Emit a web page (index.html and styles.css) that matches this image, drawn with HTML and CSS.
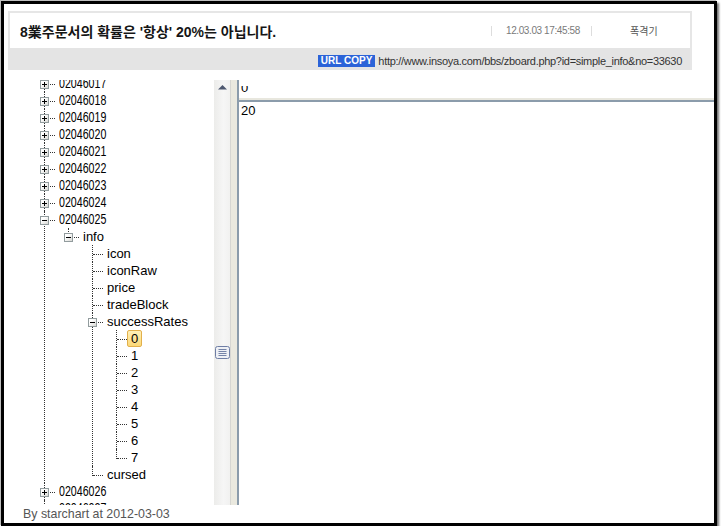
FILE: index.html
```html
<!DOCTYPE html>
<html lang="ko">
<head>
  <meta charset="UTF-8">
  <title>8業주문서의 확률은 '항상' 20%는 아닙니다.</title>
  <link rel="stylesheet" href="styles.css">
</head>
<body>
  <div class="frame">
    <!-- 글 제목 -->
    <div class="post-head">
      <div class="post-title-row">
        <div class="post-title">8業주문서의 확률은 '항상' 20%는 아닙니다.</div>
        <div class="post-date">12.03.03 17:45:58</div>
        <div class="post-author">폭격기</div>
      </div>
      <div class="post-url-row">
        <span class="url-copy">URL COPY</span>
        <span class="url-text">http://www.insoya.com/bbs/zboard.php?id=simple_info&amp;no=33630</span>
      </div>
    </div>

    <!-- 스크린샷 -->
    <div class="shot">
      <div class="tree-pane">
        <ul class="tree">
          <li><span class="tog plus"></span><div class="row"><span class="n">02046017</span></div></li>
          <li><span class="tog plus"></span><div class="row"><span class="n">02046018</span></div></li>
          <li><span class="tog plus"></span><div class="row"><span class="n">02046019</span></div></li>
          <li><span class="tog plus"></span><div class="row"><span class="n">02046020</span></div></li>
          <li><span class="tog plus"></span><div class="row"><span class="n">02046021</span></div></li>
          <li><span class="tog plus"></span><div class="row"><span class="n">02046022</span></div></li>
          <li><span class="tog plus"></span><div class="row"><span class="n">02046023</span></div></li>
          <li><span class="tog plus"></span><div class="row"><span class="n">02046024</span></div></li>
          <li><span class="tog"></span><div class="row"><span class="n">02046025</span></div>
            <ul>
              <li><span class="tog"></span><div class="row">info</div>
                <ul>
                  <li><div class="row">icon</div></li>
                  <li><div class="row">iconRaw</div></li>
                  <li><div class="row">price</div></li>
                  <li><div class="row">tradeBlock</div></li>
                  <li><span class="tog"></span><div class="row">successRates</div>
                    <ul>
                      <li><div class="row"><span class="sel">0</span></div></li>
                      <li><div class="row">1</div></li>
                      <li><div class="row">2</div></li>
                      <li><div class="row">3</div></li>
                      <li><div class="row">4</div></li>
                      <li><div class="row">5</div></li>
                      <li><div class="row">6</div></li>
                      <li><div class="row">7</div></li>
                    </ul>
                  </li>
                  <li><div class="row">cursed</div></li>
                </ul>
              </li>
            </ul>
          </li>
          <li><span class="tog plus"></span><div class="row"><span class="n">02046026</span></div></li>
          <li><span class="tog plus"></span><div class="row"><span class="n">02046027</span></div></li>
        </ul>
      </div>
      <div class="vscroll">
        <svg class="arrow-up" width="17" height="10" viewBox="0 0 17 10"><polygon points="4,9.5 8.5,5 13,9.5" fill="#4e5870"/></svg>
        <svg class="grip" width="15" height="13" viewBox="0 0 15 13">
          <rect x="0.5" y="0.5" width="14" height="12" rx="2" fill="#eef0f5" stroke="#6f7ea5"/>
          <path d="M3.5 3.5h8M3.5 5.5h8M3.5 7.5h8M3.5 9.5h8" stroke="#7584a8"/>
        </svg>
      </div>
      <div class="split-v"></div>
      <div class="value-pane">
        <div class="value-top"><div class="value-line">0</div></div>
        <div class="split-h"></div>
        <div class="value-main">20</div>
      </div>
    </div>

    <div class="post-foot">By starchart at 2012-03-03</div>
  </div>
</body>
</html>
```

FILE: styles.css
```css
body {
  margin: 0;
  padding: 0;
  background: #fff;
  font-family: 'Liberation Sans', 'Noto Sans CJK KR', Arial, sans-serif;
}
.frame {
  margin: 1px 0 0 1px;
  width: 710px;
  height: 519px;
  border: 3px solid #000;
  background: #fff;
  box-shadow: 2px 2px 2px rgba(0,0,0,.55), -1px -1px 1px rgba(0,0,0,.25);
}

/* 제목 박스 */
.post-head {
  margin: 7px 0 0 4px;
  width: 680px;
  border: 2px solid #e6e6e6;
  border-bottom: 0;
}
.post-title-row {
  height: 35px;
  display: flex;
  align-items: center;
  background: #fff;
}
.post-title {
  flex: 1;
  padding-left: 10px;
  font-size: 14px;
  font-weight: bold;
  color: #151515;
  white-space: nowrap;
}
.post-date {
  width: 85px;
  height: 10px;
  line-height: 10px;
  padding-left: 14px;
  border-left: 1px solid #ddd;
  font-size: 10px;
  letter-spacing: -0.4px;
  color: #7a7a7a;
  white-space: nowrap;
}
.post-author {
  width: 60px;
  height: 10px;
  line-height: 10px;
  padding-left: 38px;
  border-left: 1px solid #ddd;
  font-family: 'Noto Sans CJK KR', sans-serif;
  font-size: 10px;
  color: #555;
}
.post-url-row {
  height: 22px;
  box-sizing: border-box;
  padding: 4px 8px 0 0;
  display: flex;
  justify-content: flex-end;
  align-items: center;
  gap: 3px;
  background: #e4e4e4;
}
.url-copy {
  padding: 0 3px;
  line-height: 12px;
  font-size: 10px;
  font-weight: bold;
  color: #fff;
  background: #2b63d8;
}
.url-text {
  font-size: 11px;
  letter-spacing: -0.3px;
  color: #333;
  line-height: 12px;
}

/* 스크린샷 영역 */
.shot {
  margin-top: 10px;
  height: 425px;
  display: flex;
}
.tree-pane {
  width: 210px;
  overflow: hidden;
  background: #fff;
}
.tree, .tree ul {
  list-style: none;
  margin: 0;
  padding: 0;
}
.tree {
  margin: -5px 0 0 40px;
  font-size: 13px;
  color: #000;
}
.tree ul {
  padding-left: 24px;
}
.tree li {
  position: relative;
}
.tree li::before {
  content: '';
  position: absolute;
  left: 0;
  top: 0;
  bottom: 0;
  border-left: 1px dotted #333;
}
.tree li:last-child::before {
  bottom: auto;
  height: 10px;
}
.tree li::after {
  content: '';
  position: absolute;
  left: 1px;
  top: 9px;
  width: 10px;
  border-top: 1px dotted #333;
}
.row {
  height: 17px;
  line-height: 17px;
  padding-left: 15px;
  white-space: nowrap;
}
.n {
  display: inline-block;
  font-size: 14px;
  transform: scaleX(.76);
  transform-origin: 0 50%;
}
.tog {
  position: absolute;
  left: -4px;
  top: 5px;
  width: 9px;
  height: 9px;
  box-sizing: border-box;
  border: 1px solid #929c9e;
  background: linear-gradient(135deg, #fff 30%, #d8d8d4);
  z-index: 1;
}
.tog::before {
  content: '';
  position: absolute;
  left: 1px;
  top: 3px;
  width: 5px;
  height: 1px;
  background: #000;
}
.tog.plus::after {
  content: '';
  position: absolute;
  left: 3px;
  top: 1px;
  width: 1px;
  height: 5px;
  background: #000;
}
.sel {
  display: inline-block;
  height: 17px;
  box-sizing: border-box;
  margin-left: -4px;
  padding: 0 3px;
  line-height: 15px;
  border: 1px solid #e2b04c;
  border-radius: 2px;
  background: linear-gradient(#fff0b8, #fcd977);
  position: relative;
  z-index: 2;
}

.vscroll {
  width: 16px;
  border-right: 1px solid #d6d6d2;
  background: linear-gradient(to right, #ececea, #f6f6f6 60%, #f1f1f0);
}
.arrow-up {
  display: block;
}
.grip {
  display: block;
  margin: 256px 0 0 1px;
}
.split-v {
  width: 6px;
  background: #eae9df;
  border-right: 2px solid #8b9cab;
}
.value-pane {
  flex: 1;
  display: flex;
  flex-direction: column;
  background: #fff;
}
.value-top {
  margin-top: 6px;
  height: 12px;
  overflow: hidden;
}
.value-line, .value-main {
  padding-left: 2px;
  font-size: 13px;
  line-height: 17px;
  color: #000;
}
.value-line {
  margin-top: -7px;
}
.split-h {
  height: 2px;
  background: #e8e7de;
  border-bottom: 2px solid #8b9cab;
}
.value-main {
  flex: 1;
}

.post-foot {
  height: 18px;
  line-height: 18px;
  padding-left: 19px;
  font-size: 12.4px;
  color: #555;
}
```
